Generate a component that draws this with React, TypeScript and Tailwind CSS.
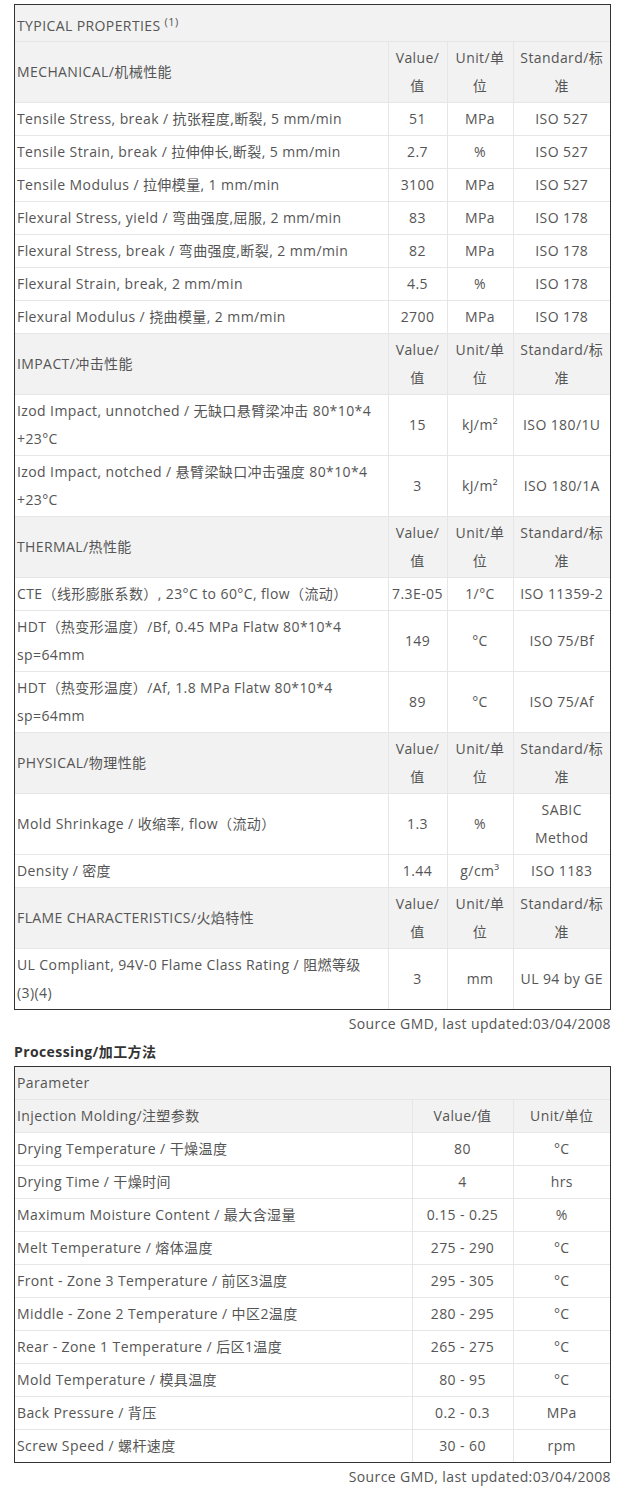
import React from "react";

type Row = { name: React.ReactNode; value: string; unit: string; std: React.ReactNode };
type Section = { title: string; rows: Row[] };

const sections: Section[] = [
  {
    title: "MECHANICAL/机械性能",
    rows: [
      { name: "Tensile Stress, break / 抗张程度,断裂, 5 mm/min", value: "51", unit: "MPa", std: "ISO 527" },
      { name: "Tensile Strain, break / 拉伸伸长,断裂, 5 mm/min", value: "2.7", unit: "%", std: "ISO 527" },
      { name: "Tensile Modulus / 拉伸模量, 1 mm/min", value: "3100", unit: "MPa", std: "ISO 527" },
      { name: "Flexural Stress, yield / 弯曲强度,屈服, 2 mm/min", value: "83", unit: "MPa", std: "ISO 178" },
      { name: "Flexural Stress, break / 弯曲强度,断裂, 2 mm/min", value: "82", unit: "MPa", std: "ISO 178" },
      { name: "Flexural Strain, break, 2 mm/min", value: "4.5", unit: "%", std: "ISO 178" },
      { name: "Flexural Modulus / 挠曲模量, 2 mm/min", value: "2700", unit: "MPa", std: "ISO 178" },
    ],
  },
  {
    title: "IMPACT/冲击性能",
    rows: [
      {
        name: (
          <>
            Izod Impact, unnotched / 无缺口悬臂梁冲击 80*10*4
            <br />
            +23°C
          </>
        ),
        value: "15",
        unit: "kJ/m²",
        std: "ISO 180/1U",
      },
      {
        name: (
          <>
            Izod Impact, notched / 悬臂梁缺口冲击强度 80*10*4
            <br />
            +23°C
          </>
        ),
        value: "3",
        unit: "kJ/m²",
        std: "ISO 180/1A",
      },
    ],
  },
  {
    title: "THERMAL/热性能",
    rows: [
      { name: "CTE（线形膨胀系数）, 23°C to 60°C, flow（流动）", value: "7.3E-05", unit: "1/°C", std: "ISO 11359-2" },
      {
        name: (
          <>
            HDT（热变形温度）/Bf, 0.45 MPa Flatw 80*10*4
            <br />
            sp=64mm
          </>
        ),
        value: "149",
        unit: "°C",
        std: "ISO 75/Bf",
      },
      {
        name: (
          <>
            HDT（热变形温度）/Af, 1.8 MPa Flatw 80*10*4
            <br />
            sp=64mm
          </>
        ),
        value: "89",
        unit: "°C",
        std: "ISO 75/Af",
      },
    ],
  },
  {
    title: "PHYSICAL/物理性能",
    rows: [
      {
        name: "Mold Shrinkage / 收缩率, flow（流动）",
        value: "1.3",
        unit: "%",
        std: (
          <>
            SABIC
            <br />
            Method
          </>
        ),
      },
      { name: "Density / 密度", value: "1.44", unit: "g/cm³", std: "ISO 1183" },
    ],
  },
  {
    title: "FLAME CHARACTERISTICS/火焰特性",
    rows: [
      {
        name: (
          <>
            UL Compliant, 94V-0 Flame Class Rating / 阻燃等级
            <br />
            (3)(4)
          </>
        ),
        value: "3",
        unit: "mm",
        std: "UL 94 by GE",
      },
    ],
  },
];

const processing = [
  ["Drying Temperature / 干燥温度", "80", "°C"],
  ["Drying Time / 干燥时间", "4", "hrs"],
  ["Maximum Moisture Content / 最大含湿量", "0.15 - 0.25", "%"],
  ["Melt Temperature / 熔体温度", "275 - 290", "°C"],
  ["Front - Zone 3 Temperature / 前区3温度", "295 - 305", "°C"],
  ["Middle - Zone 2 Temperature / 中区2温度", "280 - 295", "°C"],
  ["Rear - Zone 1 Temperature / 后区1温度", "265 - 275", "°C"],
  ["Mold Temperature / 模具温度", "80 - 95", "°C"],
  ["Back Pressure / 背压", "0.2 - 0.3", "MPa"],
  ["Screw Speed / 螺杆速度", "30 - 60", "rpm"],
];

const td = "border-r border-b border-[#e6e6e6] last:border-r-0 px-[2px] py-[2px] align-middle";
const tableCls =
  "w-full table-fixed border-collapse [&_tr:last-child>td]:border-b-0";

function Source() {
  return <p className="text-right leading-[28px]">Source GMD, last updated:03/04/2008</p>;
}

export default function App() {
  return (
    <div
      className="bg-white text-[14px] leading-[28px] tracking-[0.4px] text-[#555] pt-[4px] pl-[14px] w-[618px]"
      style={{ fontFamily: '"Open Sans", "Noto Sans CJK SC", sans-serif' }}
    >
      <div className="w-[597px]">
        <div className="border border-[#333]">
          <table className={tableCls}>
            <colgroup>
              <col className="w-[373px]" />
              <col className="w-[59px]" />
              <col className="w-[66px]" />
              <col />
            </colgroup>
            <tbody>
              <tr className="bg-[#f2f2f2]">
                <td colSpan={4} className={td + " !pt-[7px] !pb-[1px]"}>
                  TYPICAL PROPERTIES <sup className="text-[11px]">(1)</sup>
                </td>
              </tr>
              {sections.map((s) => (
                <React.Fragment key={s.title}>
                  <tr className="bg-[#f2f2f2]">
                    <td className={td}>{s.title}</td>
                    <td className={td + " text-center"}>
                      Value/
                      <br />值
                    </td>
                    <td className={td + " text-center"}>
                      Unit/单
                      <br />位
                    </td>
                    <td className={td + " text-center"}>
                      Standard/标
                      <br />准
                    </td>
                  </tr>
                  {s.rows.map((r, i) => (
                    <tr key={i}>
                      <td className={td}>{r.name}</td>
                      <td className={td + " text-center"}>{r.value}</td>
                      <td className={td + " text-center"}>{r.unit}</td>
                      <td className={td + " text-center"}>{r.std}</td>
                    </tr>
                  ))}
                </React.Fragment>
              ))}
            </tbody>
          </table>
        </div>
        <Source />
        <h3 className="font-bold text-[#333] leading-[28px]">Processing/加工方法</h3>
        <div className="border border-[#333]">
          <table className={tableCls}>
            <colgroup>
              <col className="w-[397px]" />
              <col className="w-[101px]" />
              <col />
            </colgroup>
            <tbody>
              <tr className="bg-[#f2f2f2]">
                <td colSpan={3} className={td}>
                  Parameter
                </td>
              </tr>
              <tr className="bg-[#f2f2f2]">
                <td className={td}>Injection Molding/注塑参数</td>
                <td className={td + " text-center"}>Value/值</td>
                <td className={td + " text-center"}>Unit/单位</td>
              </tr>
              {processing.map((p) => (
                <tr key={p[0]}>
                  <td className={td}>{p[0]}</td>
                  <td className={td + " text-center"}>{p[1]}</td>
                  <td className={td + " text-center"}>{p[2]}</td>
                </tr>
              ))}
            </tbody>
          </table>
        </div>
        <Source />
      </div>
    </div>
  );
}
